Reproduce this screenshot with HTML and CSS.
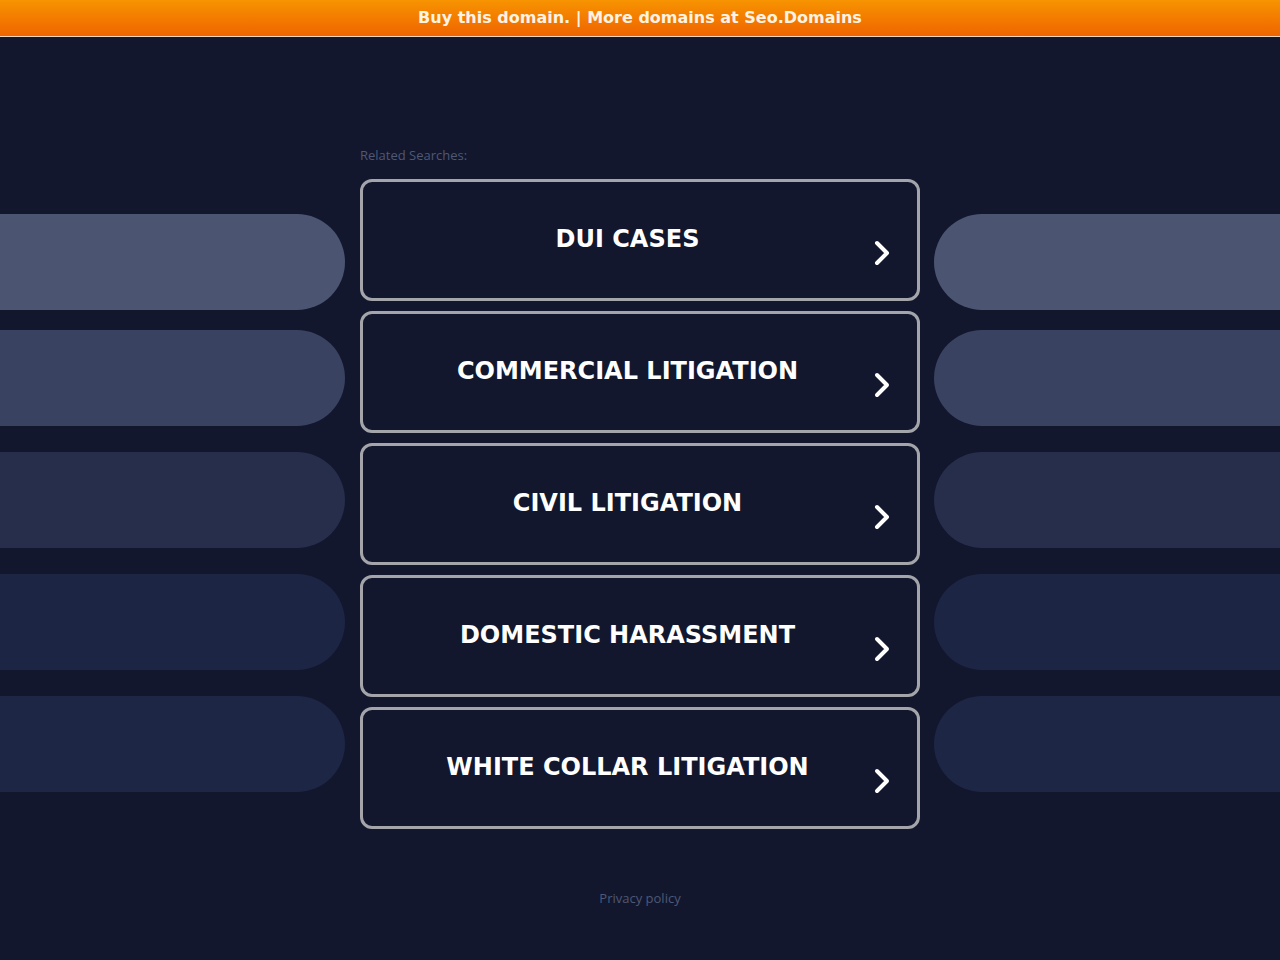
FILE: index.html
```html
<!DOCTYPE html>
<html>
<head>
<meta charset="utf-8">
<link rel="stylesheet" href="styles.css">
</head>
<body>
<div class="topbar"><a class="topbar-link">Buy this domain. | More domains at Seo.Domains</a></div>
<div class="main">
  <div class="side side-left">
    <div class="pill p1"></div>
    <div class="pill p2"></div>
    <div class="pill p3"></div>
    <div class="pill p4"></div>
    <div class="pill p5"></div>
  </div>
  <div class="center">
    <div class="label">Related Searches:</div>
    <div class="cards">
      <a class="card"><span class="card-text">DUI CASES</span><svg class="chev" width="20" height="28" viewBox="0 0 20 28"><path d="M5 4 L15 14 L5 24" fill="none" stroke="#fff" stroke-width="4" stroke-linecap="round" stroke-linejoin="round"/></svg></a>
      <a class="card"><span class="card-text">COMMERCIAL LITIGATION</span><svg class="chev" width="20" height="28" viewBox="0 0 20 28"><path d="M5 4 L15 14 L5 24" fill="none" stroke="#fff" stroke-width="4" stroke-linecap="round" stroke-linejoin="round"/></svg></a>
      <a class="card"><span class="card-text">CIVIL LITIGATION</span><svg class="chev" width="20" height="28" viewBox="0 0 20 28"><path d="M5 4 L15 14 L5 24" fill="none" stroke="#fff" stroke-width="4" stroke-linecap="round" stroke-linejoin="round"/></svg></a>
      <a class="card"><span class="card-text">DOMESTIC HARASSMENT</span><svg class="chev" width="20" height="28" viewBox="0 0 20 28"><path d="M5 4 L15 14 L5 24" fill="none" stroke="#fff" stroke-width="4" stroke-linecap="round" stroke-linejoin="round"/></svg></a>
      <a class="card"><span class="card-text">WHITE COLLAR LITIGATION</span><svg class="chev" width="20" height="28" viewBox="0 0 20 28"><path d="M5 4 L15 14 L5 24" fill="none" stroke="#fff" stroke-width="4" stroke-linecap="round" stroke-linejoin="round"/></svg></a>
    </div>
    <div class="footer">Privacy policy</div>
  </div>
  <div class="side side-right">
    <div class="pill p1"></div>
    <div class="pill p2"></div>
    <div class="pill p3"></div>
    <div class="pill p4"></div>
    <div class="pill p5"></div>
  </div>
</div>
</body>
</html>
```
FILE: styles.css
```css
html, body {
  margin: 0;
  padding: 0;
}
body {
  background: #12172d;
  font-family: "DejaVu Sans", sans-serif;
  width: 1280px;
  height: 960px;
  overflow: hidden;
}
.topbar {
  height: 36px;
  background: linear-gradient(to bottom, #f79400, #ef6400);
  border-bottom: 1px solid #f2d6c0;
  display: flex;
  align-items: center;
  justify-content: center;
}
.topbar-link {
  color: #fff3e6;
  font-weight: bold;
  font-size: 16px;
  line-height: 20px;
}
.main {
  display: flex;
}
.side {
  display: flex;
  flex-direction: column;
  padding-top: 177px;
}
.side-left {
  width: 345px;
  margin-right: 15px;
}
.side-right {
  width: 346px;
  margin-left: 14px;
}
.pill {
  height: 96px;
  margin-bottom: 26px;
}
.pill.p1 { margin-bottom: 20px; }
.side-left .pill { border-radius: 0 48px 48px 0; }
.side-right .pill { border-radius: 48px 0 0 48px; }
.p1 { background: #4b5572; }
.p2 { background: #394260; }
.p3 { background: #262e4c; }
.p4 { background: #1d2545; }
.p5 { background: #1d2645; }
.center {
  width: 560px;
  display: flex;
  flex-direction: column;
}
.label {
  margin-top: 109px;
  font-family: "Open Sans", sans-serif;
  font-size: 13px;
  line-height: 18px;
  color: #4f5877;
  margin-bottom: 15px;
}
.cards {
  display: flex;
  flex-direction: column;
  gap: 10px;
}
.card {
  box-sizing: border-box;
  height: 122px;
  border: 3px solid #a4a5ab;
  border-radius: 12px;
  display: flex;
  align-items: center;
  padding-left: 20px;
  padding-right: 25px;
}
.card-text {
  flex: 1;
  text-align: center;
  color: #fff;
  font-weight: bold;
  font-size: 24px;
  margin-top: -2px;
}
.chev {
  margin-top: 26px;
}
.footer {
  margin-top: 60px;
  text-align: center;
  font-family: "Open Sans", sans-serif;
  font-size: 13px;
  color: #4f5877;
}
```
